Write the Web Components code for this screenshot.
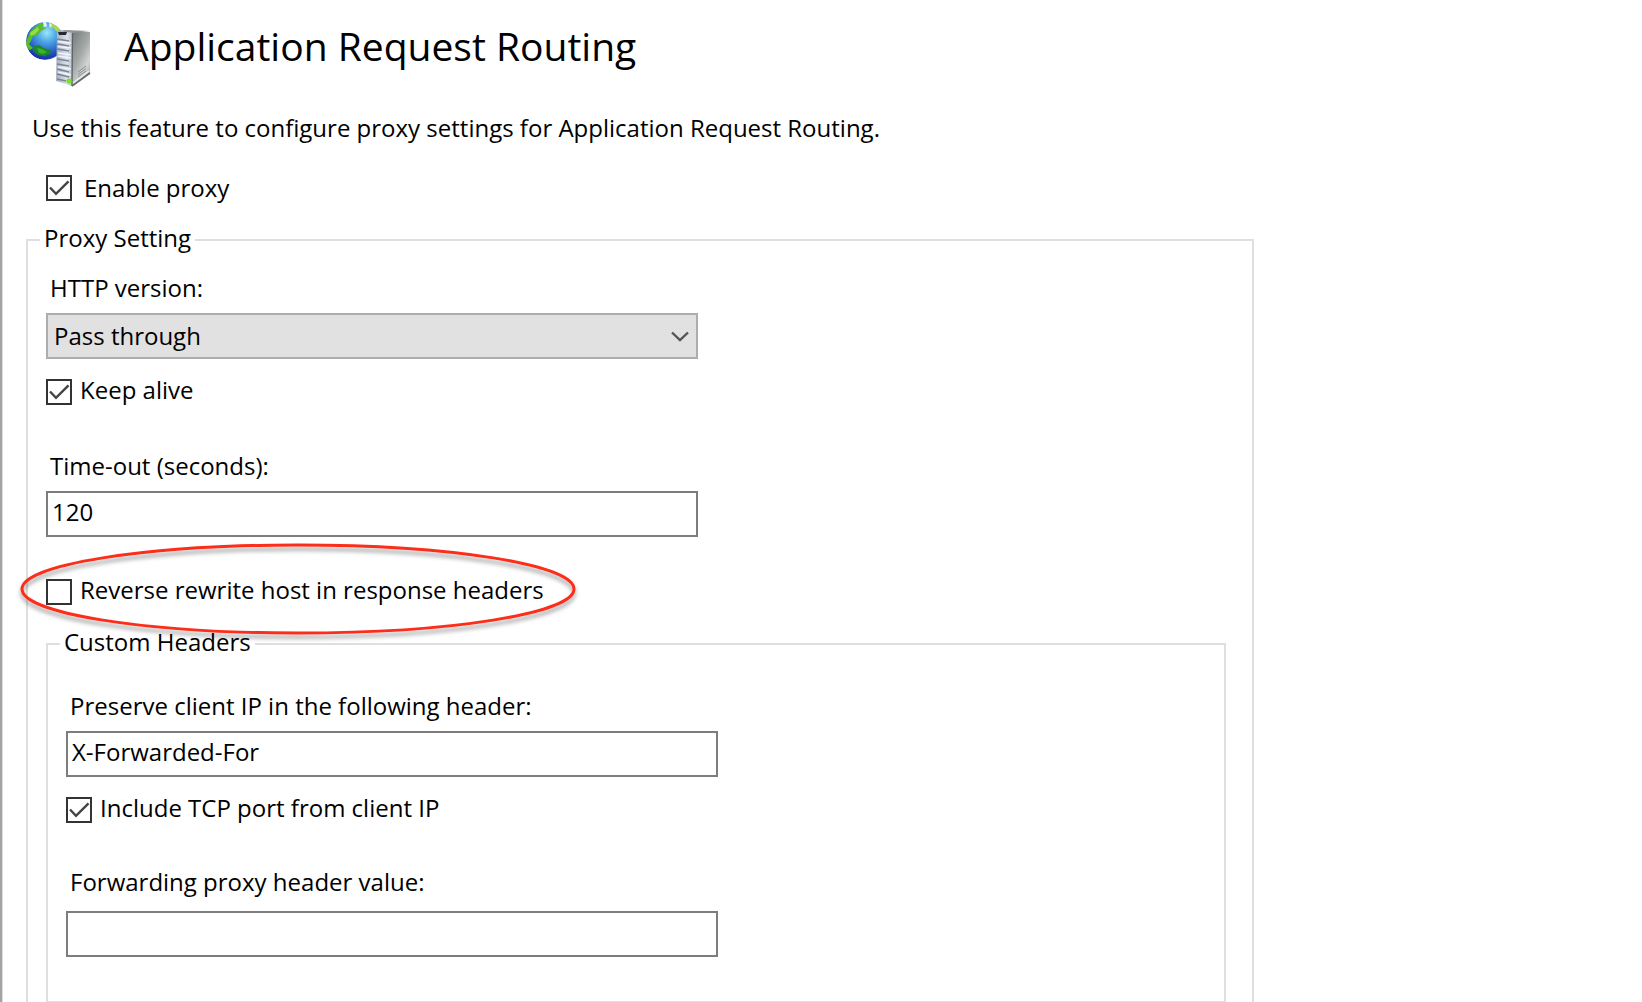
<!DOCTYPE html>
<html lang="en">
<head>
<meta charset="utf-8">
<title>Application Request Routing</title>
<style>
  body { margin: 0; background: #fff; color: #000; font: 24px/34px "Open Sans", "Noto Sans", "Noto Sans CJK TC", sans-serif; }
</style>
</head>
<body>
<arr-page></arr-page>

<template id="page-template">
  <style>
    :host { display: block; box-sizing: border-box; height: 100vh; overflow: hidden; border-left: 2px solid #a3a3a3; box-shadow: inset 1px 0 #dedede; padding: 22px 24px; }
    header { display: flex; align-items: flex-start; gap: 32px; }
    h1 { margin: 0; font-size: 39px; line-height: 48px; font-weight: 400; }
    p { margin: 23px 0 26px 6px; }
    .enable { margin-left: 20px; margin-bottom: 18px; --gap: 12px; --lift: 0px; }
    .outer { max-width: 1228px; }
    .inner { margin-right: 8px; }
    .first { margin-top: 14px; }
    .preserve { margin-top: 28px; }
    .keep { margin: 16px 0 40px; }
    .reverse { margin: 38px 0 18px; }
    .include { margin: 16px 0 38px; }
    .forward { --gap: 12px; margin-bottom: 44px; }
    .rest { height: 60px; }
  </style>
  <header><server-icon></server-icon><h1>Application Request Routing</h1></header>
  <p>Use this feature to configure proxy settings for Application Request Routing.</p>
  <check-row class="enable" text="Enable proxy" checked></check-row>
  <group-box class="outer" text="Proxy Setting">
    <drop-field class="first" text="HTTP version:" value="Pass through"></drop-field>
    <check-row class="keep" text="Keep alive" checked></check-row>
    <text-field text="Time-out (seconds):" value="120"></text-field>
    <call-out class="reverse"><check-row text="Reverse rewrite host in response headers"></check-row></call-out>
    <group-box class="inner" text="Custom Headers">
      <text-field class="preserve" text="Preserve client IP in the following header:" value="X-Forwarded-For"></text-field>
      <check-row class="include" text="Include TCP port from client IP" checked></check-row>
      <text-field class="forward" text="Forwarding proxy header value:" value=""></text-field>
    </group-box>
    <div class="rest"></div>
  </group-box>
</template>

<template id="group-template">
  <style>
    :host { display: block; }
    fieldset { margin: 0; border: 2px solid #dfdfdf; padding: 0 18px; min-width: 0; }
    legend { margin-left: -6px; padding: 0 4px; height: 34px; line-height: 30px; }
  </style>
  <fieldset><legend></legend><slot></slot></fieldset>
</template>

<template id="check-template">
  <style>
    :host { display: block; }
    label { display: flex; align-items: center; gap: var(--gap, 8px); height: 34px; }
    input { appearance: none; box-sizing: border-box; flex: none; width: 26px; height: 26px; margin: 0; border: 2px solid #333; background: #fff; }
    .box { position: relative; display: flex; }
    svg { position: absolute; inset: 0; pointer-events: none; display: none; }
    input:checked + svg { display: block; }
    .text { padding-bottom: var(--lift, 4px); }
  </style>
  <label><span class="box"><input type="checkbox"><svg width="26" height="26" viewBox="0 0 26 26" fill="none" stroke="#444" stroke-width="2.4"><path d="M4 12.5 L10 18.8 L22.5 6.3"/></svg></span><span class="text"></span></label>
</template>

<template id="field-template">
  <style>
    :host { display: flex; flex-direction: column; gap: var(--gap, 8px); max-width: 652px; }
    label { margin-left: 4px; }
    input { box-sizing: border-box; width: 100%; height: 46px; margin: 0; border: 2px solid #7d7d7d; border-radius: 0; padding: 0 4px 6px; background: #fff; color: inherit; font: inherit; }
  </style>
  <label for="control"></label>
  <input id="control" type="text">
</template>

<template id="drop-template">
  <style>
    :host { display: flex; flex-direction: column; gap: 8px; max-width: 652px; }
    label { margin-left: 4px; }
    .wrap { position: relative; }
    select { appearance: none; display: block; box-sizing: border-box; width: 100%; height: 46px; margin: 0; border: 2px solid #adadad; border-radius: 0; padding: 0 40px 0 6px; background: #e1e1e1; color: inherit; font: inherit; }
    svg { position: absolute; right: 8px; top: 17px; pointer-events: none; }
  </style>
  <label for="control"></label>
  <div class="wrap"><select id="control"><option></option></select><svg width="20" height="13" viewBox="0 0 20 13" fill="none" stroke="#555" stroke-width="2.4"><path d="M2 2.5 L10 10.2 L18 2.5"/></svg></div>
</template>

<template id="callout-template">
  <style>
    :host { display: block; position: relative; }
    svg { position: absolute; left: -28px; top: -34px; pointer-events: none; overflow: visible; }
  </style>
  <slot></slot>
  <svg width="562" height="100" viewBox="0 0 562 100" aria-hidden="true">
    <defs><filter id="shade" x="-5%" y="-10%" width="110%" height="130%"><feDropShadow dx="0" dy="4" stdDeviation="2" flood-color="#000" flood-opacity=".38"/></filter></defs>
    <ellipse cx="280" cy="48" rx="276" ry="44" fill="none" stroke="#fb2f1b" stroke-width="3" filter="url(#shade)"/>
  </svg>
</template>

<template id="icon-template">
  <style>:host { display: block; } svg { display: block; }</style>
  <svg width="66" height="66" viewBox="0 0 66 66" aria-hidden="true">
    <defs>
      <radialGradient id="sea" cx=".55" cy=".28" r=".75"><stop offset="0" stop-color="#9be6f7"/><stop offset=".35" stop-color="#4aa4e4"/><stop offset=".75" stop-color="#2450c0"/><stop offset="1" stop-color="#18259a"/></radialGradient>
      <linearGradient id="side" x1="0" y1="0" x2=".7" y2="1"><stop offset="0" stop-color="#747a7a"/><stop offset=".5" stop-color="#a4a9a8"/><stop offset=".8" stop-color="#d2d5d4"/><stop offset="1" stop-color="#a9adad"/></linearGradient>
      <linearGradient id="front" x1="0" y1="0" x2="1" y2="0"><stop offset="0" stop-color="#a6afbd"/><stop offset=".65" stop-color="#dfe3e9"/><stop offset="1" stop-color="#b0b7c0"/></linearGradient>
      <clipPath id="disc"><circle cx="19" cy="19" r="19"/></clipPath>
    </defs>
    <g clip-path="url(#disc)">
      <circle cx="19" cy="19" r="19" fill="url(#sea)"/>
      <path d="M0 20 L4 10 L13 2 L19 0 L16 5 L20 6 L15 9 L11 14 L7 14 L5 19 L3 22 L7 26 L4 28 L0 25Z" fill="#58be26"/>
      <path d="M4 11 L12 5 L13 8 L9 12 L5 14Z" fill="#9bdc44"/>
      <path d="M23 0 L32 4 L35 11 L30 9 L27 5 L25 7Z" fill="#a9d55c"/>
      <path d="M17 0 L20 0 L21 4 L18 5Z M23 1 L26 3 L24 6Z" fill="#eef6e8"/>
      <path d="M8 24 L13 23 L18 26 L25 28 L24 32 L18 34 L12 33 L7 29Z" fill="#168b2c"/>
      <path d="M11 26 L16 27 L21 30 L17 32 L13 31Z" fill="#43ad2e"/>
      <path d="M2 32 Q15 42 30 34 L30 40 L2 40Z" fill="#8aaee4" opacity=".45"/>
    </g>
    <path d="M31 9 L47 11 L46 64 L30 59Z" fill="url(#front)"/>
    <path d="M46 10 L64 10 L64 51 L46 64Z" fill="url(#side)"/>
    <path d="M31 9 L40 8 L64 9 L47 11Z" fill="#8f9494"/>
    <path d="M32 10 L41 10 L40 13 L33 13Z" fill="#242a30"/>
    <g stroke="#79849a" stroke-width="1.7" fill="none"><path d="M31 17 L43 19 M31 22 L43 24 M31 27 L43 29 M31 37 L43 39 M31 42 L43 44 M31 47 L43 50 M31 52 L43 55 M31 57 L40 59"/></g>
    <g stroke="#f1f4f8" stroke-width="1.5" fill="none"><path d="M32 19.5 L45 21 M32 24.5 L45 26 M32 31 L45 33 M32 34 L45 36 M32 45 L45 47 M32 50 L45 53"/></g>
    <path d="M46.5 11 L46 64" stroke="#5d6467" stroke-width="1.3"/>
    <path d="M46 64 L64 51" stroke="#666c6e" stroke-width="1.8"/>
    <path d="M47 61 L63 49" stroke="#eceeee" stroke-width="1.5"/>
    <path d="M52 50 L60 44 M52 52.5 L60 46.5 M52 55 L60 49" stroke="#858b8d" stroke-width="1"/>
    <circle cx="43" cy="59" r="2.6" fill="#75e419"/>
  </svg>
</template>

<script>
  class Part extends HTMLElement {
    constructor() {
      super();
      this.attachShadow({ mode: 'open' }).append(
        document.getElementById(this.constructor.template).content.cloneNode(true));
    }
    find(selector) { return this.shadowRoot.querySelector(selector); }
  }
  class ServerIcon extends Part { static template = 'icon-template'; }
  class CallOut extends Part { static template = 'callout-template'; }
  class ArrPage extends Part { static template = 'page-template'; }
  class GroupBox extends Part {
    static template = 'group-template';
    connectedCallback() { this.find('legend').textContent = this.getAttribute('text'); }
  }
  class CheckRow extends Part {
    static template = 'check-template';
    connectedCallback() {
      this.find('.text').textContent = this.getAttribute('text');
      this.find('input').checked = this.hasAttribute('checked');
    }
  }
  class TextField extends Part {
    static template = 'field-template';
    connectedCallback() {
      this.find('label').textContent = this.getAttribute('text');
      this.find('input').value = this.getAttribute('value');
    }
  }
  class DropField extends Part {
    static template = 'drop-template';
    connectedCallback() {
      this.find('label').textContent = this.getAttribute('text');
      this.find('option').textContent = this.getAttribute('value');
    }
  }
  customElements.define('server-icon', ServerIcon);
  customElements.define('call-out', CallOut);
  customElements.define('group-box', GroupBox);
  customElements.define('check-row', CheckRow);
  customElements.define('text-field', TextField);
  customElements.define('drop-field', DropField);
  customElements.define('arr-page', ArrPage);
</script>
</body>
</html>
